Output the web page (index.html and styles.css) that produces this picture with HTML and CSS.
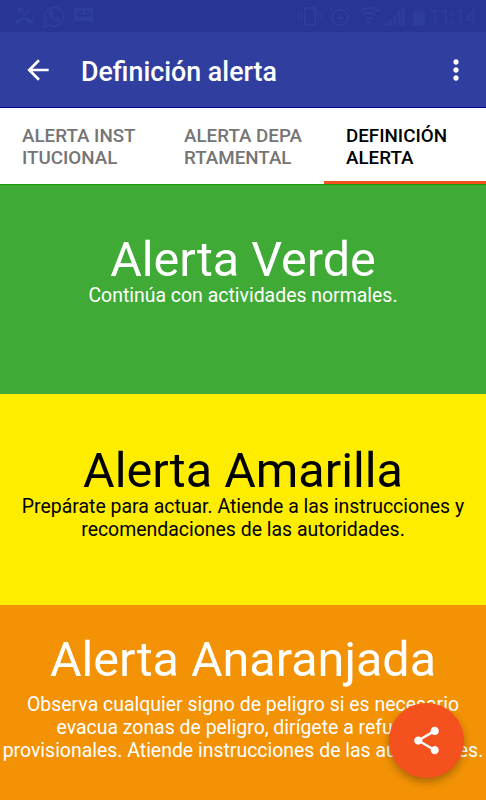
FILE: index.html
```html
<!DOCTYPE html>
<html lang="es">
<head>
    <meta charset="UTF-8">
    <meta name="viewport" content="width=device-width, initial-scale=1.0">
    <title>Definición alerta</title>
    <link rel="stylesheet" href="styles.css">
</head>
<body>
    <div class="status-bar">
        <svg class="status-icons" width="486" height="32" viewBox="0 0 486 32">
            <!-- Missed call -->
            <path d="M19 14V9h5M19 9l5.500 5.500L30 9" fill="none" stroke="currentColor" stroke-width="1.800"/>
            <path d="M14.500 21c5-5 14.500-5 19.500 0l-3 3.500-4.500-2.500v-2c-2-.8-3.500-.8-5.500 0v2l-4 2.500z"/>
            <!-- WhatsApp -->
            <path d="M44.500 26.500l1.500-5.500A9.500 9.500 0 1 1 49.500 24.800z" fill="none" stroke="currentColor" stroke-width="1.800"/>
            <path d="M50 10.500l2-.5 1.500 3.500-1.300 1.700c1 1.800 2 2.800 3.800 3.600l1.500-1.500 3.300 1.600c0 2-2 3-3.600 2.700-4-.8-8-5-8.300-8-.1-1.200.3-2.300 1.100-3.100z"/>
            <!-- Voicemail -->
            <path fill-rule="evenodd" d="M74 8h19v16l-4-3H74zM80 10.500a3 3 0 1 0 0 6h8a3 3 0 1 0-2.500-1.500h-3A3 3 0 0 0 80 10.500zM80 12a1.500 1.500 0 1 1 0 3 1.500 1.500 0 0 1 0-3zM88 12a1.500 1.500 0 1 1 0 3 1.500 1.500 0 0 1 0-3z"/>
            <!-- Vibrate -->
            <path d="M305 8h10v17h-10z" fill="none" stroke="currentColor" stroke-width="2"/>
            <path d="M301.500 10.500v11M298.500 13v6M318 10.500v11M321 13v6" fill="none" stroke="currentColor" stroke-width="1.300"/>
            <!-- Alarm -->
            <path d="M348 17.500a8 8 0 1 1-16 0 8 8 0 0 1 16 0zM339.500 13v5h4M329.500 11l5-4M350 11l-5-4" fill="none" stroke="currentColor" stroke-width="1.800"/>
            <!-- Wifi -->
            <path d="M359 12q10.500-8 21 0M362.500 15.500q7-5.500 14 0M366 19q3.500-2.500 7 0" fill="none" stroke="currentColor" stroke-width="2.200"/>
            <circle cx="369.500" cy="22.500" r="1.500"/>
            <!-- Signal and battery -->
            <path d="M385 22h3v4h-3zM389.200 19h3v7h-3zM393.400 15h3v11h-3zM397.600 11h3v15h-3zM401.800 7h3v19h-3z"/>
            <path opacity=".5" d="M416 8h6v2h3v3h-12v-3h3z"/>
            <path d="M413 13h12v13h-12z"/>
        </svg>
        <span class="status-time">11:14</span>
    </div>

    <header class="toolbar">
        <svg class="back-icon" viewBox="0 0 24 24">
            <path d="M20 11H7.830l5.590-5.590L12 4l-8 8 8 8 1.410-1.410L7.830 13H20v-2z"/>
        </svg>
        <h1 class="toolbar-title">Definición alerta</h1>
        <svg class="menu-icon" viewBox="0 0 24 24">
            <path d="M12 8c1.100 0 2-.9 2-2s-.9-2-2-2-2 .9-2 2 .9 2 2 2zm0 2c-1.100 0-2 .9-2 2s.9 2 2 2 2-.9 2-2-.9-2-2-2zm0 6c-1.100 0-2 .9-2 2s.9 2 2 2 2-.9 2-2-.9-2-2-2z"/>
        </svg>
    </header>

    <nav class="tabs">
        <a class="tab">ALERTA INST<br>ITUCIONAL</a>
        <a class="tab">ALERTA DEPA<br>RTAMENTAL</a>
        <a class="tab active">DEFINICIÓN<br>ALERTA</a>
    </nav>

    <main class="alerts">
        <section class="alert green">
            <h2>Alerta Verde</h2>
            <p>Continúa con actividades normales.</p>
        </section>
        <section class="alert yellow">
            <h2>Alerta Amarilla</h2>
            <p>Prepárate para actuar. Atiende a las instrucciones y<br>recomendaciones de las autoridades.</p>
        </section>
        <section class="alert orange">
            <h2>Alerta Anaranjada</h2>
            <p>Observa cualquier signo de peligro si es necesario<br>evacua zonas de peligro, dirígete a refugios<br>provisionales. Atiende instrucciones de las autoridades.</p>
        </section>
    </main>

    <button class="share-button" aria-label="Compartir">
        <svg viewBox="0 0 24 24">
            <path d="M18 16.080c-.76 0-1.440.3-1.960.77L8.910 12.700c.05-.23.09-.46.09-.7s-.04-.47-.09-.7l7.050-4.110c.54.5 1.250.81 2.040.81 1.660 0 3-1.340 3-3s-1.340-3-3-3-3 1.340-3 3c0 .24.040.47.090.7L8.040 9.810C7.500 9.310 6.790 9 6 9c-1.660 0-3 1.340-3 3s1.340 3 3 3c.79 0 1.500-.31 2.040-.81l7.120 4.160c-.05.21-.08.43-.08.65 0 1.610 1.310 2.920 2.920 2.920s2.920-1.310 2.920-2.920-1.310-2.920-2.920-2.920z"/>
        </svg>
    </button>
</body>
</html>
```
FILE: styles.css
```css
* {
    margin: 0;
    padding: 0;
    box-sizing: border-box;
    font-family: Roboto, sans-serif;
}

body {
    width: 486px;
    height: 800px;
    overflow: hidden;
}

svg {
    display: block;
    fill: currentColor;
}

.status-bar {
    position: relative;
    height: 32px;
    background-color: #283593;
    color: #2f3d9a;
}

.status-time {
    position: absolute;
    left: 429px;
    top: 4px;
    font-size: 20px;
    letter-spacing: -0.5px;
    line-height: 26px;
}

.toolbar {
    display: flex;
    align-items: center;
    height: 76px;
    padding: 0 14px 0 22px;
    background-color: #303f9f;
    border-bottom: 1px solid #00008b;
    color: #fff;
}

.back-icon,
.menu-icon {
    width: 32px;
    height: 32px;
}

.toolbar-title {
    flex: 1;
    margin-left: 27px;
    padding-top: 5px;
    font-size: 26.8px;
    font-weight: 500;
}

.tabs {
    display: flex;
    height: 76px;
    background-color: #fff;
}

.tab {
    flex: 1;
    padding: 17px 0 0 22px;
    font-size: 18.8px;
    font-weight: 500;
    line-height: 22px;
    color: #757575;
}

.tab.active {
    color: #000;
    border-bottom: 3px solid #f4511e;
}

.alert {
    height: 210px;
    padding-top: 48px;
    text-align: center;
    color: #fff;
    white-space: nowrap;
}

.alert h2 {
    font-size: 48.5px;
    font-weight: 400;
    line-height: 53px;
    margin-bottom: -2px;
}

.alert p {
    font-size: 19.45px;
    line-height: 23px;
}

.green {
    background-color: #3faa36;
    border-top: 1px solid #139a0c;
}

.yellow {
    height: 211px;
    padding-top: 50px;
    background-color: #ffed00;
    color: #000;
}

.orange {
    padding-top: 28px;
    background-color: #f39205;
}

.orange h2 {
    margin-bottom: 7px;
}

.share-button {
    position: absolute;
    left: 389px;
    top: 703px;
    display: flex;
    align-items: center;
    justify-content: center;
    width: 75px;
    height: 75px;
    border: none;
    border-radius: 50%;
    background-color: #f4511e;
    color: #fff;
    box-shadow: 0 4px 9px rgba(0, 0, 0, 0.3);
}

.share-button svg {
    width: 33px;
    height: 33px;
}
```
